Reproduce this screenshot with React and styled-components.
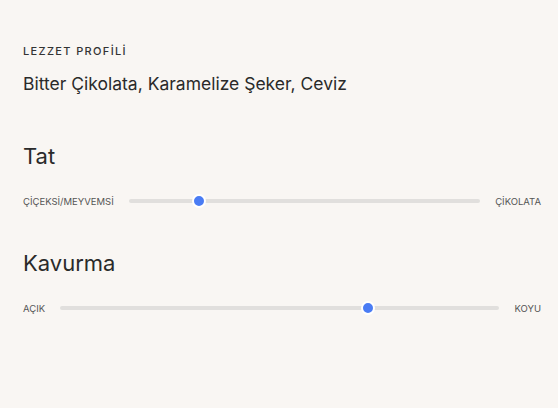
import React from 'react';
import styled, { createGlobalStyle } from 'styled-components';

const GlobalStyle = createGlobalStyle`
  html, body {
    margin: 0;
    padding: 0;
    background: #f9f6f3;
  }
  body {
    font-family: Inter, "Noto Sans", sans-serif;
    color: #2c2c2c;
  }
`;

const Page = styled.div`
  width: 558px;
  height: 408px;
  box-sizing: border-box;
  padding: 44px 17px 0 23px;
`;

const Eyebrow = styled.div`
  font-size: 11px;
  font-weight: 500;
  letter-spacing: 1.35px;
  line-height: 14px;
  color: #333;
`;

const Notes = styled.div`
  margin-top: 14px;
  font-size: 17.5px;
  line-height: 24px;
  color: #2a2a2a;
`;

const Section = styled.section`
  margin-top: ${(p) => p.$top}px;
`;

const Heading = styled.h2`
  margin: 0;
  font-size: 22px;
  font-weight: 400;
  line-height: 28px;
  color: #2a2a2a;
`;

const SliderRow = styled.div`
  display: flex;
  align-items: center;
  gap: 15px;
  margin-top: 23px;
  height: 16px;
`;

const EndLabel = styled.span`
  font-size: 9.5px;
  color: #555;
  white-space: nowrap;
`;

const Track = styled.div`
  position: relative;
  flex: 1;
  height: 4px;
  border-radius: 2px;
  background: #e1dfdd;
`;

const Thumb = styled.div`
  position: absolute;
  top: 50%;
  width: 10px;
  height: 10px;
  border-radius: 50%;
  background: #4a7cf4;
  border: 2px solid #fff;
  transform: translate(-50%, -50%);
`;

const RangeSlider = ({ min, max, value }) => (
  <SliderRow>
    <EndLabel>{min}</EndLabel>
    <Track>
      <Thumb style={{ left: `${value}%` }} />
    </Track>
    <EndLabel>{max}</EndLabel>
  </SliderRow>
);

export default function App() {
  return (
    <Page>
      <GlobalStyle />
      <Eyebrow>LEZZET PROFİLİ</Eyebrow>
      <Notes>Bitter Çikolata, Karamelize Şeker, Ceviz</Notes>
      <Section $top={46}>
        <Heading>Tat</Heading>
        <RangeSlider min="ÇİÇEKSİ/MEYVEMSİ" max="ÇİKOLATA" value={20} />
      </Section>
      <Section $top={40}>
        <Heading>Kavurma</Heading>
        <RangeSlider min="AÇIK" max="KOYU" value={70} />
      </Section>
    </Page>
  );
}
